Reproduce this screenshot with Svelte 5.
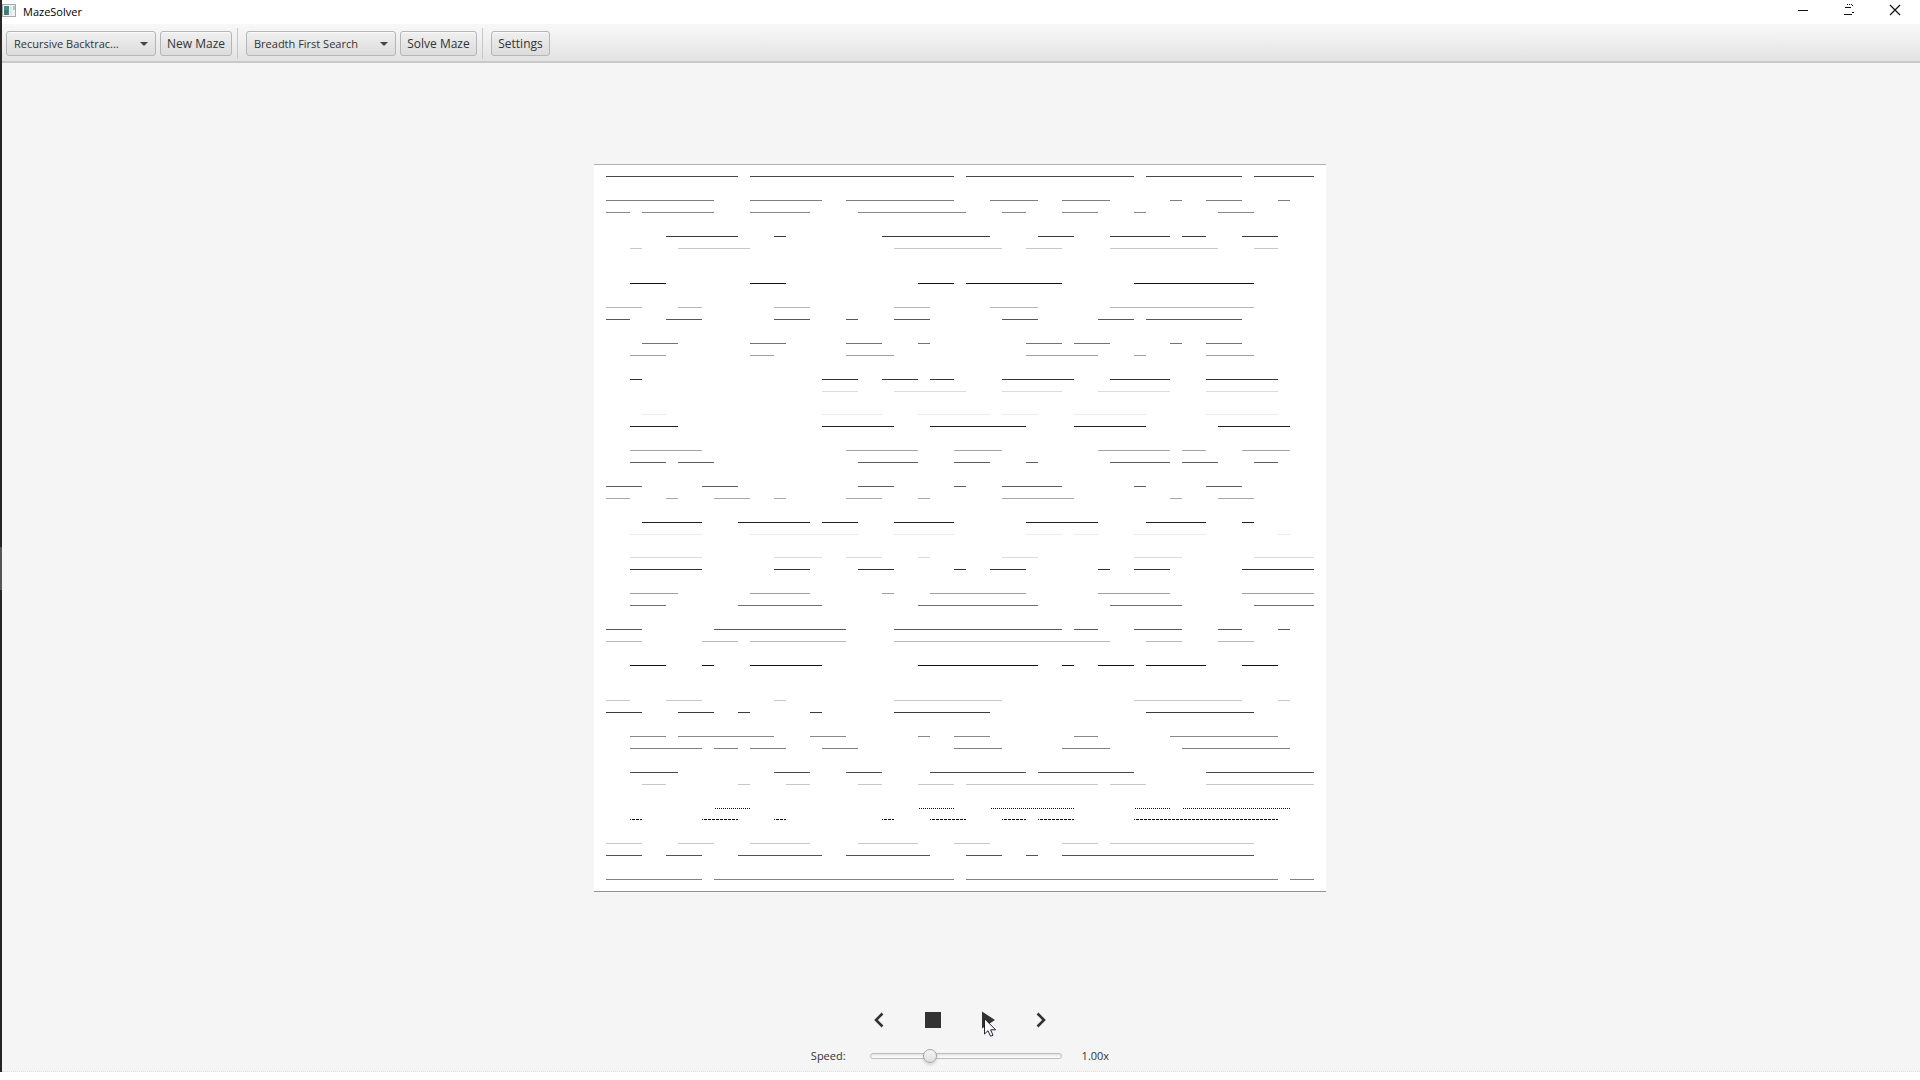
<script>
  const CELL = 12;

  let generator = $state('rb');
  let solver = $state('bfs');
  let speed = $state(30);

  // Each wall row: y offset, colour, and the column spans it covers.
  const rows = [
    [0, '#b2b2b2', '0-61'],
    [12, '#484848', '1-12 13-30 31-45 46-54 55-60'],
    [36, '#7e7e7e', '1-10 13-19 21-30 33-37 39-43 48-49 51-54 57-58'],
    [48, '#8a8a8a', '1-3 4-10 13-18 22-31 34-36 39-42 45-46 52-55'],
    [72, '#3a3a3a', '6-12 15-16 24-33 37-40 43-48 49-51 54-57'],
    [84, '#c8c8c8', '3-4 7-13 25-34 36-39 43-52 55-57'],
    [119, '#101010', '3-6 13-16 27-30 31-39 45-55'],
    [143, '#b8b8b8', '1-4 7-9 15-18 25-28 33-37 43-55'],
    [155, '#585858', '1-3 6-9 15-18 21-22 25-28 34-37 42-45 46-54'],
    [179, '#747474', '4-7 13-16 21-24 27-28 36-39 40-43 48-49 51-54'],
    [191, '#a0a0a0', '3-6 13-15 21-25 36-42 45-46 51-55'],
    [215, '#333333', '3-4 19-22 24-27 28-30 34-40 43-48 51-57'],
    [227, '#dcdcdc', '19-22 25-31 34-39 42-48 51-57'],
    [250, '#ececec', '4-6 19-24 27-33 34-37 40-46 51-57'],
    [262, '#202020', '3-7 19-25 28-36 40-46 52-58'],
    [286, '#a5a5a5', '3-9 21-27 30-34 42-48 49-51 54-58'],
    [298, '#5c5c5c', '3-6 7-10 22-27 30-33 36-37 43-48 49-52 55-57'],
    [322, '#5c5c5c', '1-4 9-12 22-25 30-31 34-39 45-46 51-54'],
    [334, '#a8a8a8', '1-3 6-7 10-13 15-16 21-24 27-28 34-40 48-49 52-55'],
    [358, '#202020', '4-9 12-18 19-22 25-30 36-42 46-51 54-55'],
    [370, '#ececec', '3-9 13-22 25-30 36-39 40-42 45-51 57-58'],
    [393, '#dcdcdc', '3-9 15-19 21-24 27-28 34-37 45-49 55-60'],
    [405, '#333333', '3-9 15-18 22-25 30-31 33-36 42-43 45-48 54-60'],
    [429, '#a0a0a0', '3-7 13-18 24-25 28-36 42-48 54-60'],
    [441, '#707070', '3-6 12-19 27-37 43-49 55-60'],
    [465, '#585858', '1-4 10-21 25-39 40-42 45-49 52-54 57-58'],
    [477, '#b8b8b8', '1-4 9-12 13-21 25-43 46-49 52-55'],
    [501, '#101010', '3-6 9-10 13-19 27-37 39-40 42-45 46-51 54-57'],
    [536, '#c8c8c8', '1-3 6-9 15-16 25-34 45-54 57-58'],
    [548, '#3a3a3a', '1-4 7-10 12-13 18-19 25-33 46-55'],
    [572, '#8a8a8a', '3-6 7-15 18-21 27-28 30-33 40-42 48-57'],
    [584, '#7e7e7e', '3-9 10-12 13-16 19-22 30-34 39-43 49-58'],
    [608, '#484848', '3-7 15-18 21-24 28-36 37-45 51-60'],
    [620, '#c8c8c8', '4-6 12-13 16-18 22-24 27-30 31-42 43-46 51-60'],
    [644, '#101010', '10-13 27-30 33-40 45-48 49-58', 'dot'],
    [655, '#101010', '3-4 9-12 15-16 24-25 28-31 34-36 37-40 45-57', 'dash'],
    [679, '#c8c8c8', '1-4 7-10 13-18 22-27 30-33 39-42 43-55'],
    [691, '#505050', '1-4 6-9 12-19 21-28 31-34 36-37 39-55'],
    [715, '#828282', '1-9 10-30 31-57 58-60'],
    [727, '#929292', '0-61']
  ];

  const walls = rows.map(([y, color, spans, kind = '']) => ({
    y,
    color,
    kind,
    d: spans
      .split(' ')
      .map((s) => {
        const [a, b] = s.split('-').map(Number);
        return `M${a * CELL} ${y + 0.5}H${b * CELL}`;
      })
      .join('')
  }));
</script>

<div class="window">
  <header class="titlebar">
    <svg class="appicon" width="14" height="14" viewBox="0 0 14 14" aria-hidden="true">
      <rect x="0.5" y="0.5" width="13" height="12" fill="#f2f2f2" stroke="#a9a9a9" />
      <rect x="2" y="2" width="5" height="9" fill="#4f8793" />
      <rect x="2" y="6" width="4" height="5" fill="#3e7d6a" />
      <rect x="8" y="2" width="2" height="9" fill="#dfe6e6" />
      <rect x="11" y="2" width="2" height="4" fill="#9fd0c0" />
    </svg>
    <span class="title">MazeSolver</span>
    <div class="winbuttons">
      <button aria-label="Minimize">
        <svg width="12" height="12" viewBox="0 0 12 12" shape-rendering="crispEdges"><path d="M1 6.5H11" stroke="#111" /></svg>
      </button>
      <button aria-label="Restore">
        <svg width="12" height="12" viewBox="0 0 12 12" shape-rendering="crispEdges">
          <path d="M4 0.5H5M6 0.5H7M8 0.5H9M9 1.5H10M2 3.5H8M9 8.5H11M1 10.5H9" stroke="#111" />
        </svg>
      </button>
      <button aria-label="Close">
        <svg width="12" height="12" viewBox="0 0 12 12"><path d="M1 1L11 11M11 1L1 11" stroke="#111" stroke-width="1.2" /></svg>
      </button>
    </div>
  </header>

  <nav class="toolbar" aria-label="Maze tools">
    <span class="combo">
      <select aria-label="Generator" bind:value={generator}>
        <option value="rb">Recursive Backtrac...</option>
      </select>
    </span>
    <button class="btn new">New Maze</button>
    <i class="sep"></i>
    <span class="combo">
      <select aria-label="Solver" bind:value={solver}>
        <option value="bfs">Breadth First Search</option>
      </select>
    </span>
    <button class="btn solve">Solve Maze</button>
    <i class="sep"></i>
    <button class="btn settings">Settings</button>
  </nav>

  <main class="stage">
    <svg class="maze" width="732" height="728" viewBox="0 0 732 728" shape-rendering="crispEdges" role="img" aria-label="Maze">
      {#each walls as w (w.y)}
        <path class={w.kind} d={w.d} stroke={w.color} />
      {/each}
    </svg>
  </main>

  <footer class="controls">
    <div class="transport">
      <button aria-label="Previous step">
        <svg width="20" height="20" viewBox="0 0 20 20"><path d="M13.500 3.500L7 10L13.500 16.500" fill="none" stroke="#333" stroke-width="2.600" /></svg>
      </button>
      <button aria-label="Stop">
        <svg width="20" height="20" viewBox="0 0 20 20"><rect x="2" y="2" width="16" height="16" fill="#333" /></svg>
      </button>
      <button aria-label="Play">
        <svg width="20" height="20" viewBox="0 0 20 20"><path d="M5 1.500L18 10L5 18.500Z" fill="#333" /></svg>
        <svg class="cursor" width="13" height="20" viewBox="0 0 13 20" aria-hidden="true">
          <path d="M0.500 0.700V16L4 12.700L6.500 18.200L9 17.200L6.600 11.800H11.600Z" fill="#fff" stroke="#222236" />
        </svg>
      </button>
      <button aria-label="Next step">
        <svg width="20" height="20" viewBox="0 0 20 20"><path d="M6.500 3.500L13 10L6.500 16.500" fill="none" stroke="#333" stroke-width="2.600" /></svg>
      </button>
    </div>
    <div class="speed">
      <label for="speed">Speed:</label>
      <input id="speed" type="range" min="0" max="100" bind:value={speed} />
      <output for="speed">1.00x</output>
    </div>
  </footer>
</div>

<style>
  :global(body) {
    background: #fff;
  }
  .window {
    box-sizing: border-box;
    display: flex;
    flex-direction: column;
    min-height: calc(100vh - 8px);
    border-left: 2px solid;
    border-image: linear-gradient(#262626 51%, #555 51%, #555 55%, #262626 55%) 1;
    background: #f5f5f5;
    color: #333;
    font: 11px/16px "Open Sans", "Noto Sans", sans-serif;
  }
  button,
  select {
    font: inherit;
    color: inherit;
  }
  .titlebar {
    display: flex;
    align-items: center;
    height: 24px;
    background: #fff;
    color: #000;
  }
  .appicon {
    margin: 0 7px 2px 0;
  }
  .winbuttons {
    display: flex;
    margin-left: auto;
    padding-bottom: 4px;
  }
  .winbuttons button {
    display: flex;
    justify-content: center;
    width: 46px;
    padding: 0;
    border: 0;
    background: none;
  }
  .winbuttons button:last-child {
    margin-right: 2px;
  }
  .toolbar {
    box-sizing: border-box;
    display: flex;
    align-items: center;
    gap: 4px;
    height: 39px;
    padding: 2px 4px 0;
    border-bottom: 2px solid #c8c8c8;
    background: linear-gradient(#f8f8f8, #ededed 55%, #e2e2e2);
  }
  .btn,
  select {
    box-sizing: border-box;
    height: 25px;
    border: 1px solid #b5b5b5;
    border-radius: 3px;
    background: linear-gradient(#f0f0f0, #dcdcdc);
    box-shadow: inset 0 1px #fafafa;
    white-space: nowrap;
  }
  select {
    padding: 0 7px;
  }
  .btn {
    padding: 0;
    font-size: 12px;
  }
  .new {
    width: 72px;
  }
  .solve {
    width: 77px;
  }
  .settings {
    width: 59px;
  }
  .combo {
    display: flex;
    position: relative;
  }
  .combo select {
    width: 150px;
    appearance: none;
  }
  .combo::after {
    content: "";
    position: absolute;
    right: 8px;
    top: 11px;
    border: 4px solid transparent;
    border-top-color: #444;
    border-bottom: 0;
    pointer-events: none;
  }
  .sep {
    width: 1px;
    height: 31px;
    margin: 0 4px 0 1px;
    background: #c8c8c8;
  }
  .stage {
    flex: 1;
    display: flex;
    align-items: center;
    justify-content: center;
    padding: 20px 2px 20px 0;
  }
  .maze {
    background: #fff;
  }
  .dot {
    stroke-dasharray: 0 1 1 0;
  }
  .dash {
    stroke-dasharray: 1 1 2 0;
  }
  .controls {
    display: flex;
    flex-direction: column;
    align-items: center;
    gap: 18px;
    padding: 17px 2px 7px 0;
    border-bottom: 1px dotted #c9f0c2;
  }
  .transport {
    display: flex;
    gap: 34px;
  }
  .transport button {
    position: relative;
    display: flex;
    padding: 0;
    border: 0;
    background: none;
  }
  .cursor {
    position: absolute;
    left: 7px;
    top: 8px;
  }
  .speed {
    display: flex;
    align-items: center;
    height: 16px;
  }
  label {
    margin-right: 24px;
  }
  output {
    margin-left: 20px;
  }
  input {
    appearance: none;
    box-sizing: border-box;
    width: 192px;
    height: 6px;
    margin: 0;
    border: 1px solid #bcbcbc;
    border-radius: 3px;
    background: linear-gradient(#e4e4e4, #fff);
  }
  input::-webkit-slider-thumb {
    appearance: none;
    box-sizing: border-box;
    width: 14px;
    height: 14px;
    border: 1px solid #a4a4a4;
    border-radius: 50%;
    background: linear-gradient(#f6f6f6, #dedede);
    box-shadow: 0 2px 3px #0002;
  }
</style>
